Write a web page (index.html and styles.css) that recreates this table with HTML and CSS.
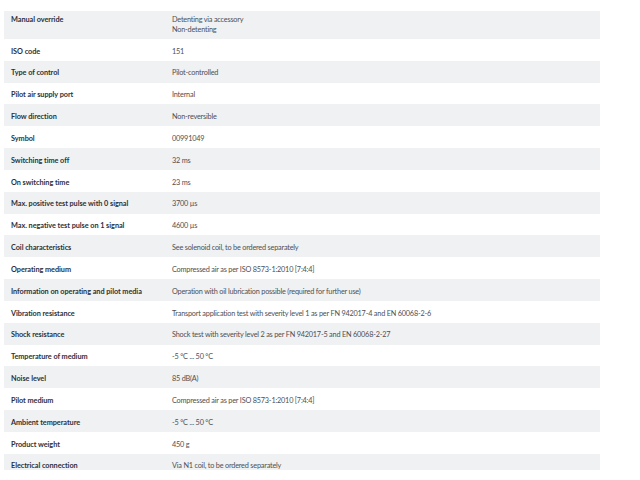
FILE: index.html
```html
<!DOCTYPE html>
<html lang="en">
<head>
<meta charset="utf-8">
<link rel="stylesheet" href="styles.css">
</head>
<body>
<div class="wrap">
<table class="specs">
<tbody>
<tr class="multi"><th>Manual override</th><td>Detenting via accessory<br>Non-detenting</td></tr>
<tr><th>ISO code</th><td>151</td></tr>
<tr><th>Type of control</th><td>Pilot-controlled</td></tr>
<tr><th>Pilot air supply port</th><td>Internal</td></tr>
<tr><th>Flow direction</th><td>Non-reversible</td></tr>
<tr><th>Symbol</th><td>00991049</td></tr>
<tr><th>Switching time off</th><td>32 ms</td></tr>
<tr><th>On switching time</th><td>23 ms</td></tr>
<tr><th>Max. positive test pulse with 0 signal</th><td>3700 µs</td></tr>
<tr><th>Max. negative test pulse on 1 signal</th><td>4600 µs</td></tr>
<tr><th>Coil characteristics</th><td>See solenoid coil, to be ordered separately</td></tr>
<tr><th>Operating medium</th><td>Compressed air as per ISO 8573-1:2010 [7:4:4]</td></tr>
<tr><th>Information on operating and pilot media</th><td>Operation with oil lubrication possible (required for further use)</td></tr>
<tr><th>Vibration resistance</th><td>Transport application test with severity level 1 as per FN 942017-4 and EN 60068-2-6</td></tr>
<tr><th>Shock resistance</th><td>Shock test with severity level 2 as per FN 942017-5 and EN 60068-2-27</td></tr>
<tr><th>Temperature of medium</th><td>-5 °C ... 50 °C</td></tr>
<tr><th>Noise level</th><td>85 dB(A)</td></tr>
<tr><th>Pilot medium</th><td>Compressed air as per ISO 8573-1:2010 [7:4:4]</td></tr>
<tr><th>Ambient temperature</th><td>-5 °C ... 50 °C</td></tr>
<tr><th>Product weight</th><td>450 g</td></tr>
<tr><th>Electrical connection</th><td>Via N1 coil, to be ordered separately</td></tr>
</tbody>
</table>
</div>
</body>
</html>
```

FILE: styles.css
```css
html, body {
  margin: 0;
  padding: 0;
  background: #ffffff;
  overflow: hidden;
}
.wrap {
  padding: 11px 0 0 4px;
  height: 459px;
  overflow: hidden;
}
.specs {
  width: 596px;
  border-collapse: collapse;
  font-family: Lato, "Open Sans", sans-serif;
  font-size: 7.3px;
  line-height: 10px;
}
.specs tr:nth-child(odd) {
  background: #f0f1f3;
}
.specs th,
.specs td {
  padding: 7.6px 0 4.24px;
  text-align: left;
  vertical-align: top;
}
.specs th {
  width: 161px;
  padding-left: 7px;
  font-weight: 700;
  color: #2b313a;
  letter-spacing: -0.05px;
}
.specs td {
  color: #4d5054;
  letter-spacing: -0.2px;
}
.specs tr.multi th,
.specs tr.multi td {
  padding-top: 4px;
  padding-bottom: 4px;
}
```
